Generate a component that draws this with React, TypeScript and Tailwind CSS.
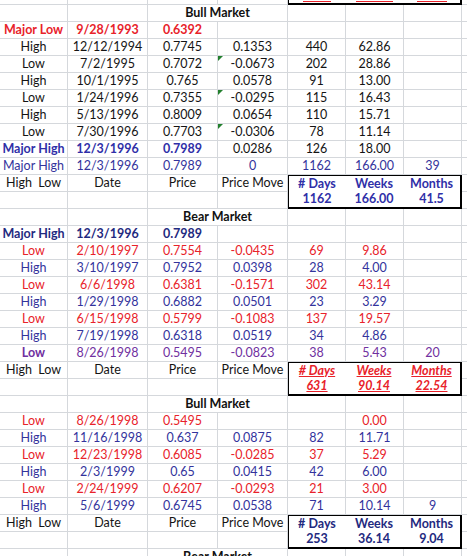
import React from "react";

const K = "text-[#141414]";
const R = "text-[#e8222a]";
const RB = "text-[#e8222a] font-bold";
const B = "text-[#33339c]";
const BB = "text-[#2f2fa8] font-bold";
const N = "text-[#1f2a80] font-bold";
const P = "text-[#7030a0]";
const PB = "text-[#7030a0] font-bold";

const W = ["w-[68px]", "w-[80px]", "w-[70px]", "w-[70px]", "w-[58px]", "w-[58px]", "w-[58px]"];

type DataRow = { kind: "data"; cells: string[]; cls: string | string[]; tri?: boolean };
type TitleRow = { kind: "title"; text: string };
type BoxRow = { kind: "box"; vals: string[]; cls: string };
type Row = DataRow | TitleRow | BoxRow;

const d = (cells: string[], cls: string | string[], tri?: boolean): DataRow => ({ kind: "data", cells, cls, tri });

const rows: Row[] = [
  { kind: "title", text: "Bull Market" },
  d(["Major Low", "9/28/1993", "0.6392", "", "", "", ""], RB),
  d(["High", "12/12/1994", "0.7745", "0.1353", "440", "62.86", ""], K),
  d(["Low", "7/2/1995", "0.7072", "-0.0673", "202", "28.86", ""], K, true),
  d(["High", "10/1/1995", "0.765", "0.0578", "91", "13.00", ""], K),
  d(["Low", "1/24/1996", "0.7355", "-0.0295", "115", "16.43", ""], K, true),
  d(["High", "5/13/1996", "0.8009", "0.0654", "110", "15.71", ""], K),
  d(["Low", "7/30/1996", "0.7703", "-0.0306", "78", "11.14", ""], K, true),
  d(["Major High", "12/3/1996", "0.7989", "0.0286", "126", "18.00", ""], [BB, BB, BB, K, K, K, K]),
  d(["Major High", "12/3/1996", "0.7989", "0", "1162", "166.00", "39"], B),
  { kind: "box", vals: ["1162", "166.00", "41.5"], cls: BB },
  { kind: "title", text: "Bear Market" },
  d(["Major High", "12/3/1996", "0.7989", "", "", "", ""], N),
  d(["Low", "2/10/1997", "0.7554", "-0.0435", "69", "9.86", ""], R),
  d(["High", "3/10/1997", "0.7952", "0.0398", "28", "4.00", ""], B),
  d(["Low", "6/6/1998", "0.6381", "-0.1571", "302", "43.14", ""], R),
  d(["High", "1/29/1998", "0.6882", "0.0501", "23", "3.29", ""], B),
  d(["Low", "6/15/1998", "0.5799", "-0.1083", "137", "19.57", ""], R),
  d(["High", "7/19/1998", "0.6318", "0.0519", "34", "4.86", ""], B),
  d(["Low", "8/26/1998", "0.5495", "-0.0823", "38", "5.43", "20"], [PB, P, P, P, P, P, P]),
  { kind: "box", vals: ["631", "90.14", "22.54"], cls: "text-[#e8222a] font-bold italic underline" },
  { kind: "title", text: "Bull Market" },
  d(["Low", "8/26/1998", "0.5495", "", "", "0.00", ""], R),
  d(["High", "11/16/1998", "0.637", "0.0875", "82", "11.71", ""], B),
  d(["Low", "12/23/1998", "0.6085", "-0.0285", "37", "5.29", ""], R),
  d(["High", "2/3/1999", "0.65", "0.0415", "42", "6.00", ""], B),
  d(["Low", "2/24/1999", "0.6207", "-0.0293", "21", "3.00", ""], R),
  d(["High", "5/6/1999", "0.6745", "0.0538", "71", "10.14", "9"], B),
  { kind: "box", vals: ["253", "36.14", "9.04"], cls: N },
  { kind: "title", text: "Bear Market" },
];

function Cell({ w, text, cls = K, tri }: { w: string; text?: string; cls?: string; tri?: boolean }) {
  return (
    <div
      className={`relative flex h-[17px] shrink-0 items-center justify-center whitespace-pre border-r border-b border-[#d5d8dc] ${w} ${cls}`}
    >
      {text}
      {tri && (
        <span className="absolute left-0 top-0 h-0 w-0 border-t-[5px] border-r-[5px] border-t-[#23802e] border-r-transparent" />
      )}
    </div>
  );
}

function Tail() {
  return <div className="h-[17px] flex-1 border-b border-[#d5d8dc]" />;
}

function Title({ text }: { text: string }) {
  return (
    <div className="flex">
      <Cell w={W[0]} />
      <Cell w={W[1]} />
      <Cell w="w-[140px]" text={text} cls="font-bold text-[#111]" />
      <Cell w={W[4]} />
      <Cell w={W[5]} />
      <Cell w={W[6]} />
      <Tail />
    </div>
  );
}

function Data({ row }: { row: DataRow }) {
  return (
    <div className="flex">
      {row.cells.map((t, i) => (
        <Cell
          key={i}
          w={W[i]}
          text={t}
          cls={Array.isArray(row.cls) ? row.cls[i] : row.cls}
          tri={row.tri && i === 3}
        />
      ))}
      <Tail />
    </div>
  );
}

function Box({ vals, cls }: { vals: string[]; cls: string }) {
  const head = ["# Days", "Weeks", "Months"];
  return (
    <div className="flex">
      <div className="flex flex-col">
        <div className="flex">
          {["High  Low", "Date", "Price", "Price Move"].map((t, i) => (
            <Cell key={t} w={W[i]} text={t} />
          ))}
        </div>
        <div className="flex">
          {[0, 1, 2, 3].map((i) => (
            <Cell key={i} w={W[i]} />
          ))}
        </div>
      </div>
      <div className="-ml-px -mt-px grid h-[35px] w-[175px] shrink-0 grid-cols-[56px_58px_57px] grid-rows-2 items-center border-2 border-black bg-white text-center">
        {head.map((t) => (
          <span key={t} className={cls}>
            {t}
          </span>
        ))}
        {vals.map((t) => (
          <span key={t} className={cls}>
            {t}
          </span>
        ))}
      </div>
      <div className="flex flex-1 flex-col">
        <Tail />
        <Tail />
      </div>
    </div>
  );
}

export default function App() {
  return (
    <div className="h-[556px] w-[467px] overflow-hidden bg-white font-['Lato',sans-serif] text-[12.5px] leading-none">
      <div className="-mt-[12px] flex">
        {[0, 1, 2, 3].map((i) => (
          <Cell key={i} w={W[i]} />
        ))}
        <div className="-ml-px grid h-[17px] w-[175px] shrink-0 grid-cols-[56px_58px_57px] items-end border-x-2 border-b-2 border-black pb-px">
          <span className="mx-auto h-px w-[28px] bg-[#e8222a]" />
          <span className="mx-auto h-px w-[37px] bg-[#e8222a]" />
          <span className="mx-auto h-px w-[30px] bg-[#e8222a]" />
        </div>
        <Tail />
      </div>
      {rows.map((r, i) =>
        r.kind === "title" ? (
          <Title key={i} text={r.text} />
        ) : r.kind === "box" ? (
          <Box key={i} vals={r.vals} cls={r.cls} />
        ) : (
          <Data key={i} row={r} />
        ),
      )}
    </div>
  );
}
